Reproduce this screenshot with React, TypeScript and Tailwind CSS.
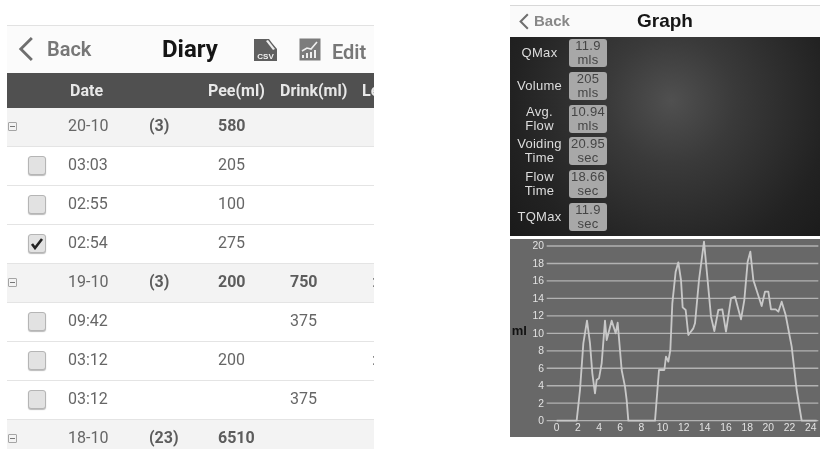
const rows = [
  { kind: "group", date: "20-10", count: "(3)", pee: "580", drink: "", last: "" },
  { kind: "item", date: "03:03", pee: "205", drink: "", last: "" },
  { kind: "item", date: "02:55", pee: "100", drink: "", last: "" },
  { kind: "item", date: "02:54", pee: "275", drink: "", last: "", checked: true },
  { kind: "group", date: "19-10", count: "(3)", pee: "200", drink: "750", last: ":" },
  { kind: "item", date: "09:42", pee: "", drink: "375", last: "" },
  { kind: "item", date: "03:12", pee: "200", drink: "", last: ":" },
  { kind: "item", date: "03:12", pee: "", drink: "375", last: "" },
  { kind: "group", date: "18-10", count: "(23)", pee: "6510", drink: "", last: "" },
];

const stats = [
  { label: ["QMax"], value: "11.9", unit: "mls" },
  { label: ["Volume"], value: "205", unit: "mls" },
  { label: ["Avg.", "Flow"], value: "10.94", unit: "mls" },
  { label: ["Voiding", "Time"], value: "20.95", unit: "sec" },
  { label: ["Flow", "Time"], value: "18.66", unit: "sec" },
  { label: ["TQMax"], value: "11.9", unit: "sec" },
];

const yTicks = [20, 18, 16, 14, 12, 10, 8, 6, 4, 2, 0];
const xTicks = [0, 2, 4, 6, 8, 10, 12, 14, 16, 18, 20, 22, 24];

// traced from the curve, in 3x chart coords
const curve =
  "155,572 215,572 225,480 235,340 246,272 255,340 262,430 270,490 275,450 282,445 290,400 300,272 305,330 320,272 332,310 338,278 350,420 360,470 365,510 370,572 450,572 462,420 478,420 483,380 490,395 496,360 502,220 512,125 520,97 528,150 533,232 542,240 550,315 565,295 570,280 582,150 597,35 605,120 618,260 628,303 640,240 652,238 663,305 678,205 690,200 708,268 718,210 728,95 736,65 745,150 770,228 780,185 790,185 798,238 812,238 820,245 830,215 842,255 860,350 875,480 890,572 935,572";

function CsvIcon() {
  return (
    <svg width="25" height="24" viewBox="0 0 25 24">
      <path d="M1 1h15l3 4 5 6v12H1z" fill="#5f5f5f" />
      <path d="M13 3l2-1 7 9-2 1z" fill="#eeeeee" />
      <text x="12.5" y="21" textAnchor="middle" fontSize="8" fontWeight="700" fill="#f2f2f2" fontFamily="Liberation Sans, sans-serif">
        CSV
      </text>
    </svg>
  );
}

function ChartIcon() {
  return (
    <svg width="22" height="23" viewBox="0 0 22 23">
      <rect x="0.5" y="0.5" width="21" height="22" fill="#7c7c7c" />
      <path d="M3 13l5-3 4 1 6-7" stroke="#efefef" strokeWidth="1.6" fill="none" />
      <path d="M3 20v-3h2v3zM7 20v-5h2v5zM11 20v-6h2v6zM15 20v-8h2v8z" fill="#efefef" />
    </svg>
  );
}

function Chevron({ w, h, stroke }: { w: number; h: number; stroke: number }) {
  return (
    <svg width={w} height={h} viewBox="0 0 12 20">
      <path d="M10.5 1.5L2 10l8.5 8.5" fill="none" stroke="#6f6f6f" strokeWidth={stroke} />
    </svg>
  );
}

function Checkbox({ checked }: { checked?: boolean }) {
  return (
    <div className="w-[18px] h-[19px] rounded-[3px] border border-[#b5b5b5] bg-[#e2e2e2] shadow-[0_1px_1px_#bbbbbb] flex items-center justify-center">
      {checked && (
        <svg width="14" height="13" viewBox="0 0 14 13">
          <path d="M2 7l3 4 7-9" fill="none" stroke="#222222" strokeWidth="2.6" />
        </svg>
      )}
    </div>
  );
}

function Diary() {
  return (
    <div className="w-[367px] h-[449px] pt-[25px] overflow-hidden font-['Roboto',sans-serif]">
      <div className="h-[48px] border-t border-[#e2e2e2] bg-[#fbfbfb] flex items-center">
        <div className="ml-[11px] mt-[-2px]">
          <Chevron w={16} h={26} stroke={2.2} />
        </div>
        <span className="ml-[13px] w-[115px] text-[20px] font-semibold text-[#777777] mt-[-1px]">Back</span>
        <span className="w-[91px] text-[24px] font-bold text-[#151515] mt-[-1px]">Diary</span>
        <CsvIcon />
        <span className="ml-[21px] mt-[-1px]">
          <ChartIcon />
        </span>
        <span className="ml-[11px] text-[20px] font-semibold text-[#777777] mt-[4px]">Edit</span>
      </div>
      <div className="h-[35px] bg-[#505050] grid grid-cols-[63px_138px_72px_82px_1fr] items-center text-[16px] font-bold text-[#e8e8e8] whitespace-nowrap overflow-hidden">
        <span />
        <span>Date</span>
        <span>Pee(ml)</span>
        <span>Drink(ml)</span>
        <span className="w-[12px] overflow-hidden">Le</span>
      </div>
      {rows.map((r, i) => (
        <div
          key={i}
          className={`h-[39px] pb-[2px] border-b border-[#e4e4e4] grid grid-cols-[61px_81px_69px_72px_82px_1fr] items-center text-[16px] text-[#666666] whitespace-nowrap ${
            r.kind === "group" ? "bg-[#f3f3f3]" : "bg-white"
          }`}
        >
          {r.kind === "group" ? (
            <div className="pl-[1px]">
              <div className="w-[9px] h-[9px] border border-[#a5a5a5] rounded-[1px] flex items-center justify-center">
                <div className="w-[5px] h-px bg-[#777777]" />
              </div>
            </div>
          ) : (
            <div className="pl-[21px]">
              <Checkbox checked={r.checked} />
            </div>
          )}
          <span>{r.date}</span>
          <span className="font-bold text-[#5c5c5c]">{r.count}</span>
          <span className={r.kind === "group" ? "font-bold text-[#5c5c5c]" : ""}>{r.pee}</span>
          <span className={r.kind === "group" ? "font-bold text-[#5c5c5c]" : ""}>{r.drink}</span>
          <span>{r.last}</span>
        </div>
      ))}
    </div>
  );
}

function Graph() {
  return (
    <div className="w-[310px] pt-[5px] font-['Liberation_Sans',sans-serif]">
      <div className="h-[32px] border-t border-[#d8d8d8] bg-[#fafafa] flex items-center">
        <div className="ml-[8px]">
          <Chevron w={12} h={17} stroke={2.4} />
        </div>
        <span className="ml-[4px] w-[103px] text-[15px] font-bold text-[#888888]">Back</span>
        <span className="text-[19px] font-bold text-[#161616]">Graph</span>
      </div>
      <div className="h-[199px] pt-[2px] bg-[#262626] bg-[radial-gradient(circle_at_52%_32%,#505050_0%,#3a3a3a_30%,#222222_75%,#1a1a1a_100%)] flex flex-col">
        {stats.map((s) => (
          <div key={s.value + s.label[0]} className="h-[33px] flex items-start">
            <div className="w-[59px] h-[28px] flex flex-col items-center justify-center text-[13px] leading-[14px] tracking-[0.3px] text-[#dddddd]">
              {s.label.map((l) => (
                <span key={l}>{l}</span>
              ))}
            </div>
            <div className="w-[38px] h-[28px] rounded-[3px] bg-[#a8a8a8] flex flex-col items-center justify-center text-[13px] leading-[14px] tracking-[0.3px] text-[#454545]">
              <span>{s.value}</span>
              <span>{s.unit}</span>
            </div>
          </div>
        ))}
      </div>
      <div className="h-[3px] bg-white" />
      <svg width="310" height="198" viewBox="15 27 930 594" className="block bg-[#686868]">
        {yTicks.map((t, i) => {
          const y = 48 + i * 52.4;
          return (
            <g key={t}>
              <line x1="125" x2="940" y1={y} y2={y} stroke="#b2b2b2" strokeWidth="4" />
              <text x="117" y={y + 10} textAnchor="end" fontSize="31" fill="#e2e2e2" fontFamily="Liberation Sans, sans-serif">
                {t}
              </text>
            </g>
          );
        })}
        {xTicks.map((t, i) => (
          <text key={t} x={155 + i * 63.5} y="604" textAnchor="middle" fontSize="31" fill="#e2e2e2" fontFamily="Liberation Sans, sans-serif">
            {t}
          </text>
        ))}
        <text x="20" y="316" fontSize="39" fontWeight="700" fill="#111111" fontFamily="Liberation Sans, sans-serif">
          ml
        </text>
        <polyline points={curve} fill="none" stroke="#c8c8c8" strokeWidth="5.5" strokeLinejoin="round" />
      </svg>
    </div>
  );
}

export default function App() {
  return (
    <div className="w-[825px] h-[449px] bg-white overflow-hidden flex items-start pl-[7px] gap-[136px] blur-[0.7px]">
      <Diary />
      <Graph />
    </div>
  );
}
